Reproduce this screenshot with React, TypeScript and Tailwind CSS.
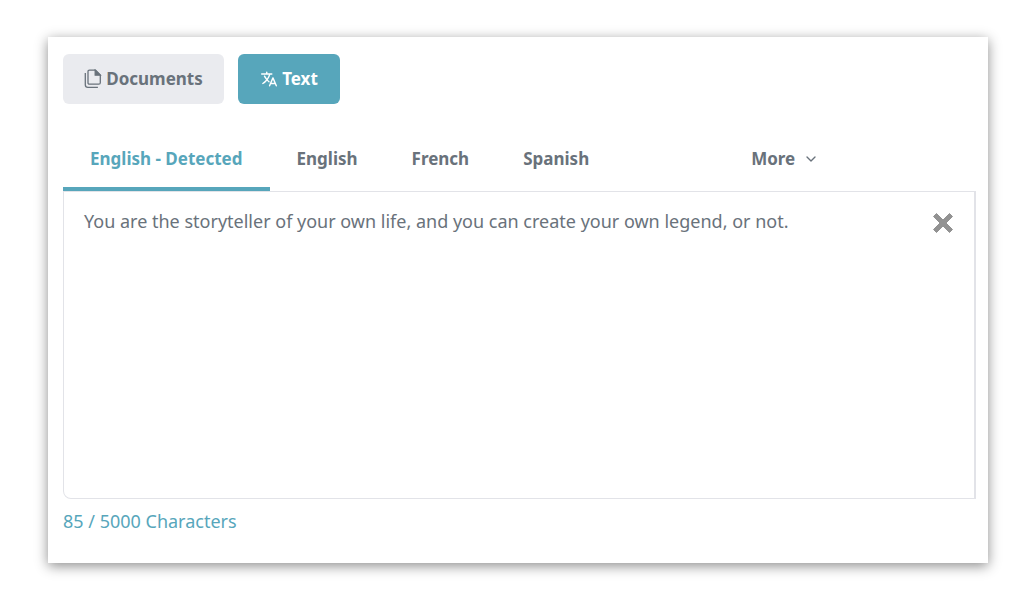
import React, { useState } from 'react';
import { IoLanguageOutline } from 'react-icons/io5';
import { ChevronDown } from 'lucide-react';

const MAX_CHARACTERS = 5000;
const languages = ['English - Detected', 'English', 'French', 'Spanish'];

function DocumentsIcon() {
  return (
    <svg viewBox="0 0 18 20" className="h-5 w-[18px]" fill="none" stroke="currentColor" strokeWidth="1.3">
      <path d="M5.5 1.2h6l4.8 4.8v7.7q0 1.5-1.5 1.5H5.5q-1.5 0-1.5-1.5v-11q0-1.5 1.5-1.5z" />
      <path d="M11.2 1.2v5h5z" fill="currentColor" />
      <path d="M1.3 4v11.8q0 2.6 2.6 2.6h10" />
    </svg>
  );
}

function ClearIcon() {
  return (
    <svg viewBox="0 0 22 22" className="h-[22px] w-[22px]" fill="currentColor">
      <path
        d="M4.5 1.5L11 8l6.500-6.500 3 3L14 11l6.500 6.500-3 3L11 14l-6.500 6.500-3-3L8 11 1.500 4.500z"
        stroke="currentColor"
        strokeLinejoin="round"
      />
    </svg>
  );
}

export default function App() {
  const [mode, setMode] = useState('text');
  const [language, setLanguage] = useState(languages[0]);
  const [text, setText] = useState(
    'You are the storyteller of your own life, and you can create your own legend, or not.'
  );

  const getModeClass = (name: string) =>
    mode === name ? 'bg-[#57a6bb] text-white' : 'bg-[#eaebef] text-[#69727b]';

  return (
    <div className="min-h-screen bg-white pt-[37px] pr-9 pb-9 pl-12 font-['Noto_Sans',sans-serif] text-[#69727b]">
      <main className="bg-white pt-[17px] pr-3 pb-[30px] pl-[15px] shadow-[0_3px_12px_rgba(0,0,0,0.45)]">
        {/* Mode buttons */}
        <div className="flex gap-3.5">
          <button
            onClick={() => setMode('documents')}
            className={`flex h-[50px] w-[161px] items-center justify-center gap-1 rounded-md text-[17px] font-bold ${getModeClass('documents')}`}
          >
            <DocumentsIcon />
            Documents
          </button>
          <button
            onClick={() => setMode('text')}
            className={`flex h-[50px] w-[102px] items-center justify-center gap-1 rounded-md text-[17px] font-bold ${getModeClass('text')}`}
          >
            <IoLanguageOutline className="h-[18px] w-[18px] [&_path]:[stroke-width:40]" />
            Text
          </button>
        </div>

        {/* Languages */}
        <div className="mt-6 flex h-[63px] text-[17px] font-bold">
          {languages.map((name) => (
            <button
              key={name}
              onClick={() => setLanguage(name)}
              className={`border-b-4 px-[27px] pt-0.5 ${
                language === name ? 'border-[#57a6bb] text-[#57a6bb]' : 'border-transparent'
              }`}
            >
              {name}
            </button>
          ))}
          <button className="ml-[108px] flex items-center gap-2 border-b-4 border-transparent px-[27px] pt-0.5">
            More
            <ChevronDown className="h-4 w-4" />
          </button>
        </div>

        {/* Source text */}
        <div className="flex h-[308px] items-start rounded-bl-lg border border-r-2 border-[#e2e3e8] pr-5">
          <textarea
            aria-label="Source text"
            value={text}
            maxLength={MAX_CHARACTERS}
            onChange={(e) => setText(e.target.value)}
            className="h-full min-w-0 flex-1 resize-none bg-transparent px-5 pt-4 text-[18px] leading-[26px] outline-none"
          />
          <button
            aria-label="Clear text"
            onClick={() => setText('')}
            className="mt-5 text-[#929292]"
          >
            <ClearIcon />
          </button>
        </div>
        <p className="mt-2.5 text-[18px] leading-6 text-[#57a6bb]">
          {text.length} / {MAX_CHARACTERS} Characters
        </p>
      </main>
    </div>
  );
}
